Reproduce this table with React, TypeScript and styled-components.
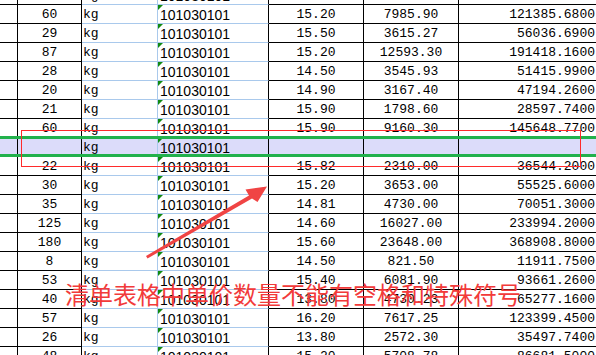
import styled, { createGlobalStyle } from "styled-components";

const GlobalStyle = createGlobalStyle`
    html, body {
        margin: 0;
        padding: 0;
        background: #fff;
        overflow: hidden;
    }
`

const Page = styled.div`
    position: relative;
    width: 596px;
    height: 355px;
    overflow: hidden;
    background: #fff;
`

const Sheet = styled.div`
    margin-top: -14px;
    display: flex;
    flex-direction: column;
`

const Row = styled.div<{ $marked?: boolean }>`
    display: grid;
    grid-template-columns: 18px 64px 76px 111px 95px 95px 140px;
    height: 19px;
    background: ${p => (p.$marked ? "#dcdcfa" : "#fff")};
`

const GRID_BLUE = "#a9c9ec"

type Align = "left" | "center" | "right"

const Cell = styled.div<{ $align?: Align; $line?: string; $side?: string; $sans?: boolean }>`
    position: relative;
    box-sizing: border-box;
    height: 19px;
    border-bottom: 1px solid ${p => p.$line || "#000"};
    border-right: ${p => (p.$side ? `1px solid ${p.$side}` : "none")};
    padding: 0 ${p => (p.$align === "right" ? "4px" : "0")} 0 ${p => (p.$align === "left" ? (p.$sans ? "2px" : "1px") : "0")};
    text-align: ${p => p.$align || "center"};
    font-family: ${p => (p.$sans ? '"Liberation Sans", Arial, sans-serif' : '"Liberation Mono", "Courier New", monospace')};
    font-size: ${p => (p.$sans ? "14px" : "13px")};
    line-height: 20px;
    color: #000;
    white-space: nowrap;
    overflow: hidden;
`

const TextMark = styled.span`
    position: absolute;
    left: 0;
    top: 0;
    width: 0;
    height: 0;
    border-top: 5px solid #118a11;
    border-right: 5px solid transparent;
`

const GreenLine = styled.div<{ $top: number }>`
    position: absolute;
    left: 0;
    right: 0;
    top: ${p => p.$top}px;
    height: 3px;
    background: #22b14c;
`

const RedBox = styled.div`
    position: absolute;
    left: 21px;
    top: 130px;
    width: 558px;
    height: 35px;
    border: 1px solid #ff2b2b;
`

const Note = styled.div`
    position: absolute;
    left: 65px;
    top: 280px;
    font-family: "Noto Sans CJK SC", "Noto Sans", sans-serif;
    font-size: 24px;
    line-height: 28px;
    color: #f23a3a;
    white-space: nowrap;
`

const Arrow = styled.svg`
    position: absolute;
    left: 0;
    top: 0;
`

type Line = [string, string, string, string, string]

const rows: Line[] = [
    ["47", "15.77", "4873.60", "76856.6720"],
    ["60", "15.20", "7985.90", "121385.6800"],
    ["29", "15.50", "3615.27", "56036.6900"],
    ["87", "15.20", "12593.30", "191418.1600"],
    ["28", "14.50", "3545.93", "51415.9900"],
    ["20", "14.90", "3167.40", "47194.2600"],
    ["21", "15.90", "1798.60", "28597.7400"],
    ["60", "15.90", "9160.30", "145648.7700"],
    ["", "", "", ""],
    ["22", "15.82", "2310.00", "36544.2000"],
    ["30", "15.20", "3653.00", "55525.6000"],
    ["35", "14.81", "4730.00", "70051.3000"],
    ["125", "14.60", "16027.00", "233994.2000"],
    ["180", "15.60", "23648.00", "368908.8000"],
    ["8", "14.50", "821.50", "11911.7500"],
    ["53", "15.40", "6081.90", "93661.2600"],
    ["40", "13.80", "4730.23", "65277.1600"],
    ["57", "16.20", "7617.25", "123399.4500"],
    ["26", "13.80", "2572.30", "35497.7400"],
    ["48", "15.20", "5708.78", "86681.5000"],
].map(([qty, price, amount, total]) => [qty, price, amount, total, ""] as Line)

export default function App() {
    return (
        <Page>
            <GlobalStyle />
            <Sheet>
                {rows.map(([qty, price, amount, total], i) => (
                    <Row key={i} $marked={i === 8}>
                        <Cell $side="#000" />
                        <Cell $side="#000">{qty}</Cell>
                        <Cell $align="left" $line={GRID_BLUE} $side={GRID_BLUE}>kg</Cell>
                        <Cell $align="left" $sans $line={GRID_BLUE} $side="#000">
                            <TextMark />
                            101030101
                        </Cell>
                        <Cell $side="#000">{price}</Cell>
                        <Cell $side="#000">{amount}</Cell>
                        <Cell $align="right">{total}</Cell>
                    </Row>
                ))}
            </Sheet>

            <GreenLine $top={136} />
            <GreenLine $top={154} />
            <RedBox />

            <Arrow width="596" height="355" viewBox="0 0 596 355">
                <polygon
                    points="146,256 249,195.5 245.5,189.5 267,186.5 257.5,202 252,198.5 147.5,258.5"
                    fill="#f04444"
                />
            </Arrow>

            <Note>清单表格中单价数量不能有空格和特殊符号</Note>
        </Page>
    )
}
